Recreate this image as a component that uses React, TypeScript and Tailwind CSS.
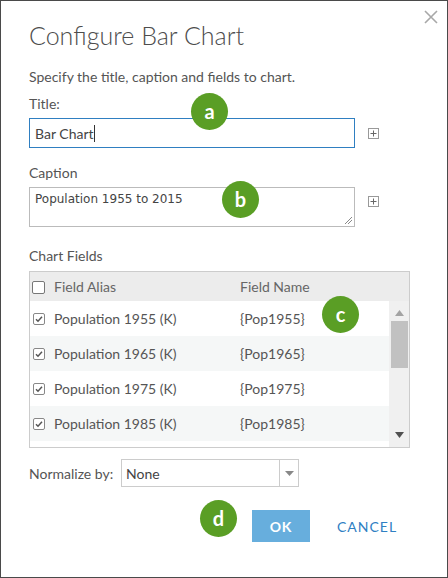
import React from 'react';

const rows = [
  { alias: 'Population 1955 (K)', name: '{Pop1955}' },
  { alias: 'Population 1965 (K)', name: '{Pop1965}' },
  { alias: 'Population 1975 (K)', name: '{Pop1975}' },
  { alias: 'Population 1985 (K)', name: '{Pop1985}' },
  { alias: 'Population 1995 (K)', name: '{Pop1995}' },
];

function Badge({ letter, className }: { letter: string; className: string }) {
  return (
    <div
      className={`absolute w-[37px] h-[37px] rounded-full bg-[#5a9e25] text-white flex items-center justify-center text-[20px] font-bold leading-none ${className}`}
    >
      <span className="-mt-[2px]">{letter}</span>
    </div>
  );
}

function PlusBox() {
  return (
    <svg width="11" height="11" viewBox="0 0 11 11" className="shrink-0">
      <rect x="0.5" y="0.5" width="10" height="10" fill="white" stroke="#999" />
      <path d="M5.5 2.5v6M2.5 5.5h6" stroke="#666" />
    </svg>
  );
}

function Check({ checked }: { checked: boolean }) {
  if (!checked) {
    return <div className="w-[13px] h-[13px] border border-[#777] rounded-[2px] bg-white" />;
  }
  return (
    <svg width="12" height="12" viewBox="0 0 12 12">
      <rect x="0.5" y="0.5" width="11" height="11" rx="1.5" fill="white" stroke="#888" />
      <path d="M3 6.2l2 2 4-4.4" fill="none" stroke="#555" strokeWidth="1.5" />
    </svg>
  );
}

export default function App() {
  return (
    <div
      className="relative w-[448px] h-[578px] bg-white border border-[#4a4a4a] text-[#555] text-[14px] overflow-hidden"
      style={{ fontFamily: 'Lato, "Open Sans", sans-serif' }}
    >
      <button className="absolute right-[9px] top-[9px]">
        <svg width="14" height="14" viewBox="0 0 14 14">
          <path d="M1 1l12 12M13 1L1 13" stroke="#a8a8a8" strokeWidth="1.6" />
        </svg>
      </button>

      <div className="pl-[28px] pt-[19px]">
        <h1 className="text-[25px] font-light leading-[30px] text-[#4d4d4d]">Configure Bar Chart</h1>

        <p className="mt-[19px] leading-[16px]">Specify the title, caption and fields to chart.</p>

        <label className="block mt-[11px] leading-[16px]">Title:</label>
        <div className="mt-[6px] flex items-center gap-[13px]">
          <div className="w-[326px] h-[30px] border border-[#2f7fc1] flex items-center pl-[5px] text-[#444]">
            Bar Chart<span className="w-px h-[17px] bg-[#333]" />
          </div>
          <PlusBox />
        </div>

        <label className="block mt-[17px] leading-[16px]">Caption</label>
        <div className="mt-[6px] flex items-start gap-[13px]">
          <div
            className="relative w-[326px] h-[40px] border border-[#bbb] pl-[5px] pt-[3px] text-[12px] leading-[16px] text-[#444]"
            style={{ fontFamily: '"DejaVu Sans", sans-serif' }}
          >
            Population 1955 to 2015
            <svg width="10" height="10" viewBox="0 0 10 10" className="absolute right-[1px] bottom-[1px]">
              <path d="M9 2L2 9M9 5L5 9" stroke="#888" strokeWidth="1" />
            </svg>
          </div>
          <div className="mt-[9px]">
            <PlusBox />
          </div>
        </div>

        <label className="block mt-[21px] leading-[16px]">Chart Fields</label>
        <div className="mt-[7px] w-[381px] h-[177px] border border-[#ccc] flex flex-col overflow-hidden">
          <div className="h-[29px] shrink-0 bg-[#ececec] flex items-center text-[#666]">
            <div className="w-[24px] pl-[2px] pt-[1px]">
              <Check checked={false} />
            </div>
            <div className="w-[186px]">Field Alias</div>
            <div>Field Name</div>
          </div>
          <div className="flex flex-1 min-h-0">
            <div className="flex-1 overflow-hidden">
              {rows.map((r, i) => (
                <div
                  key={r.name}
                  className={`h-[35px] flex items-center ${i % 2 === 1 ? 'bg-[#f5f7f7]' : 'bg-white'}`}
                >
                  <div className="w-[24px] pl-[3px]">
                    <Check checked />
                  </div>
                  <div className="w-[186px]">{r.alias}</div>
                  <div>{r.name}</div>
                </div>
              ))}
            </div>
            <div className="w-[20px] bg-[#f0f0f0] flex flex-col items-center">
              <svg width="9" height="6" viewBox="0 0 9 6" className="mt-[9px]">
                <path d="M0 6L4.5 0L9 6z" fill="#a3a3a3" />
              </svg>
              <div className="mt-[5px] w-[17px] h-[47px] bg-[#c1c1c1]" />
              <div className="flex-1" />
              <svg width="9" height="6" viewBox="0 0 9 6" className="mb-[9px]">
                <path d="M0 0L9 0L4.5 6z" fill="#505050" />
              </svg>
            </div>
          </div>
        </div>

        <div className="mt-[11px] flex items-center">
          <span className="w-[92px] shrink-0 whitespace-nowrap">Normalize by:</span>
          <div className="w-[178px] h-[28px] border border-[#ccc] flex items-center">
            <span className="flex-1 pl-[4px] text-[#444]">None</span>
            <div className="w-[19px] h-full border-l border-[#ccc] flex items-center justify-center">
              <svg width="9" height="5" viewBox="0 0 9 5">
                <path d="M0 0h9L4.5 5z" fill="#888" />
              </svg>
            </div>
          </div>
        </div>

        <div className="mt-[23px] flex items-center">
          <button className="ml-[223px] w-[58px] h-[32px] bg-[#67aedd] text-white font-bold tracking-[0.8px]">
            OK
          </button>
          <button className="ml-[27px] text-[#2f80c3] tracking-[1px]">CANCEL</button>
        </div>
      </div>

      <Badge letter="a" className="left-[190px] top-[92px]" />
      <Badge letter="b" className="left-[221px] top-[180px]" />
      <Badge letter="c" className="left-[321px] top-[295px]" />
      <Badge letter="d" className="left-[199px] top-[499px]" />
    </div>
  );
}
